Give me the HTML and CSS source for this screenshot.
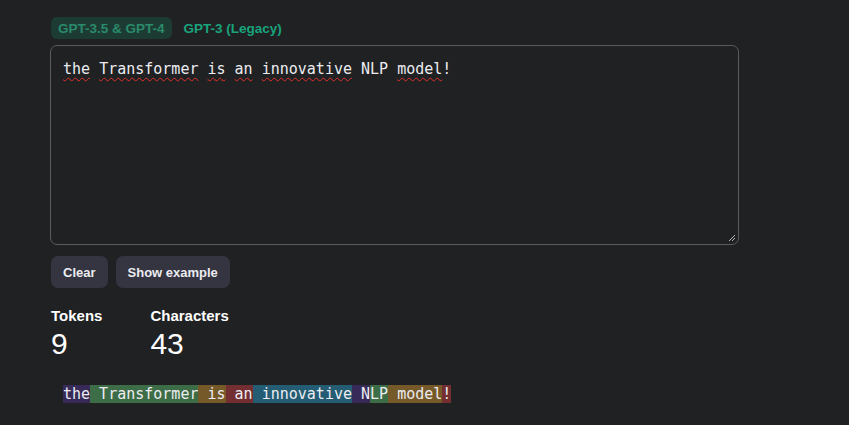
FILE: index.html
```html
<!DOCTYPE html>
<html lang="en">
<head>
<meta charset="utf-8">
<title>Tokenizer</title>
<link rel="stylesheet" href="styles.css">
</head>
<body>
<main class="page">
  <div class="tabs">
    <button class="tab tab-active">GPT-3.5 &amp; GPT-4</button>
    <button class="tab">GPT-3 (Legacy)</button>
  </div>
  <div class="editor" role="textbox" contenteditable="true" spellcheck="false"><span class="sp">the</span> <span class="sp">Transformer</span> <span class="sp">is</span> <span class="sp">an</span> <span class="sp">innovative</span> NLP <span class="sp">model</span>!<svg class="grip" width="8" height="8" viewBox="0 0 8 8"><path d="M7 1 L1 7 M7 4 L4 7" stroke="#b8b8bc" stroke-width="1"/></svg></div>
  <div class="actions">
    <button class="btn">Clear</button>
    <button class="btn">Show example</button>
  </div>
  <div class="stats">
    <div class="stat">
      <div class="stat-label">Tokens</div>
      <div class="stat-value">9</div>
    </div>
    <div class="stat">
      <div class="stat-label">Characters</div>
      <div class="stat-value">43</div>
    </div>
  </div>
  <div class="tokens"><span class="t t1">the</span><span class="t t2"> Transformer</span><span class="t t3"> is</span><span class="t t4"> an</span><span class="t t5"> innovative</span><span class="t t1"> N</span><span class="t t2">LP</span><span class="t t3"> model</span><span class="t t4">!</span></div>
</main>
</body>
</html>
```
FILE: styles.css
```css
html, body {
  margin: 0;
  padding: 0;
  background: #202123;
}
body {
  font-family: "Liberation Sans", Arial, sans-serif;
  color: #ececf1;
}
.page {
  padding: 17px 0 0 51px;
  width: 688px;
}
.tabs {
  display: flex;
  gap: 5px;
  height: 22px;
}
.tab {
  border: 0;
  background: transparent;
  font-family: "Liberation Sans", Arial, sans-serif;
  font-weight: 700;
  font-size: 13.5px;
  color: #19a37c;
  padding: 1px 7px 0;
  height: 22px;
  border-radius: 6px;
  cursor: pointer;
}
.tab-active {
  background: #1c3b33;
  color: #2b8a6b;
}
.editor {
  position: relative;
  margin-top: 6px;
  box-sizing: border-box;
  height: 200px;
  width: 689px;
  margin-left: -1px;
  border: 1px solid #5a5b62;
  border-radius: 7px;
  padding: 11px 12px;
  font-family: "DejaVu Sans Mono", monospace;
  font-size: 15px;
  line-height: 24px;
  color: #ececf1;
  outline: none;
  white-space: pre-wrap;
}
.sp {
  text-decoration: underline wavy #e0302c;
  text-decoration-thickness: 1px;
  text-underline-offset: 3px;
  text-decoration-skip-ink: none;
}
.grip {
  position: absolute;
  right: 2px;
  bottom: 2px;
}
.actions {
  display: flex;
  gap: 8px;
  margin-top: 11px;
}
.btn {
  height: 32px;
  padding: 0 12px;
  border: 0;
  border-radius: 7px;
  background: #343541;
  color: #ececf1;
  font-family: "Liberation Sans", Arial, sans-serif;
  font-weight: 700;
  font-size: 13px;
  cursor: pointer;
}
.stats {
  display: flex;
  gap: 48px;
  margin-top: 18px;
}
.stat-label {
  font-weight: 700;
  font-size: 15px;
  line-height: 20px;
  color: #ffffff;
}
.stat-value {
  font-size: 30px;
  line-height: 36px;
  color: #ffffff;
}
.tokens {
  margin-top: 20px;
  padding-left: 12px;
  font-family: "DejaVu Sans Mono", monospace;
  font-size: 15px;
  line-height: 24px;
  color: #ececf1;
  white-space: pre;
}
.t1 { background: #372a59; }
.t2 { background: #3d6d46; }
.t3 { background: #755929; }
.t4 { background: #732e31; }
.t5 { background: #235c73; }
```
